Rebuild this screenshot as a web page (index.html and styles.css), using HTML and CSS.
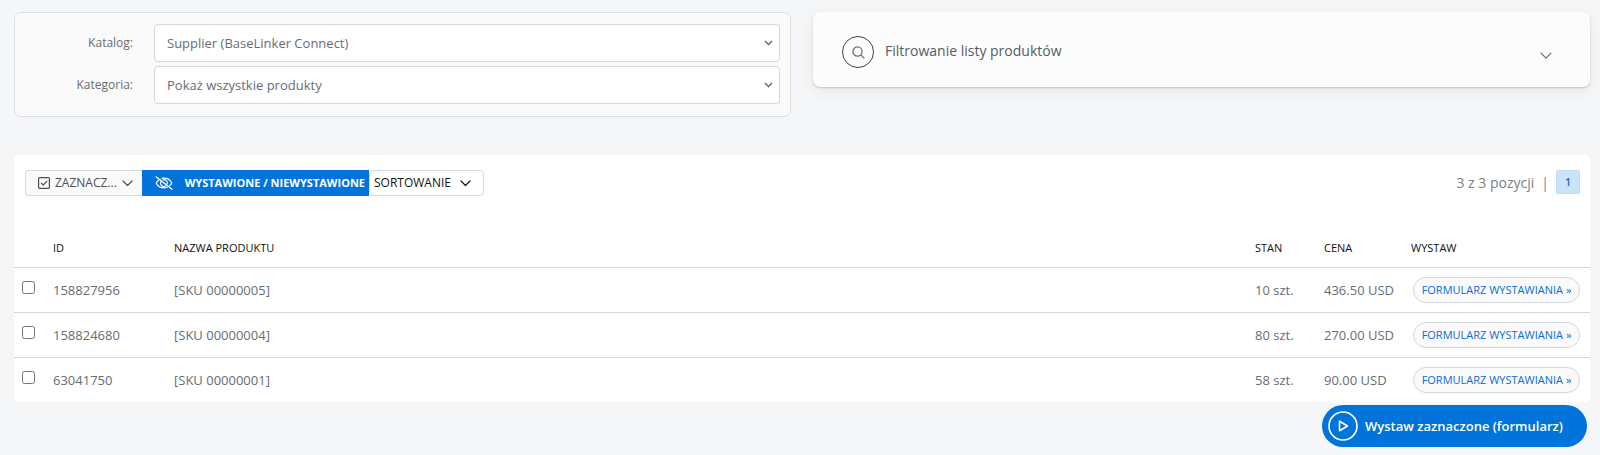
FILE: index.html
```html
<!DOCTYPE html>
<html lang="pl">
<head>
<meta charset="utf-8">
<meta name="viewport" content="width=device-width, initial-scale=1">
<title>Lista produktów</title>
<link rel="stylesheet" href="styles.css">
</head>
<body>
<main class="page">
  <div class="top">
    <form class="catalog">
      <label for="catalog">Katalog:</label>
      <select id="catalog"><option>Supplier (BaseLinker Connect)</option></select>
      <label for="category">Kategoria:</label>
      <select id="category"><option>Pokaż wszystkie produkty</option></select>
    </form>
    <button class="filter" type="button" aria-expanded="false">
      <span class="filter-icon">
        <svg width="14" height="14" viewBox="0 0 14 14"><circle cx="6.500" cy="6.500" r="4.600"/><path d="M9.900 9.900 13 13"/></svg>
      </span>
      <span class="filter-title">Filtrowanie listy produktów</span>
      <svg class="filter-chevron" width="12" height="8" viewBox="0 0 12 8"><path d="M1 1.200 6 6.200 11 1.200"/></svg>
    </button>
  </div>

  <section class="panel">
    <div class="toolbar">
      <div class="group">
        <button class="tool tool-select" type="button">
          <svg width="12" height="12" viewBox="0 0 12 12"><rect x=".6" y=".6" width="10.800" height="10.800" rx="1"/><path d="M3.400 6.200 5.200 8 8.800 4.300"/></svg>
          <span>ZAZNACZ...</span>
          <svg width="11" height="7" viewBox="0 0 11 7"><path d="M1 1 5.500 5.500 10 1"/></svg>
        </button>
        <button class="tool tool-active" type="button">
          <svg width="18" height="14" viewBox="0 0 18 14"><path d="M5 3.200C3.200 4 1.900 5.400 1.200 7c1.400 3 4.300 4.900 7.800 4.900 1.200 0 2.300-.2 3.300-.6M7 2.200C7.600 2.100 8.300 2.100 9 2.100c3.500 0 6.400 1.900 7.800 4.900-.5 1.100-1.300 2.100-2.300 2.900M6 5.500A3.300 3.300 0 0 0 10.500 10M8 3.900A3.300 3.300 0 0 1 12.200 7.800M1 .8 17 13.300"/></svg>
          <span>WYSTAWIONE / NIEWYSTAWIONE</span>
        </button>
        <button class="tool tool-sort" type="button">
          <span>SORTOWANIE</span>
          <svg width="11" height="7" viewBox="0 0 11 7"><path d="M1 1 5.500 5.500 10 1"/></svg>
        </button>
      </div>
      <nav class="pager"><span>3 z 3 pozycji</span><span>|</span><a href="#" aria-current="page">1</a></nav>
    </div>

    <table class="products">
      <colgroup><col class="c-check"><col class="c-id"><col><col class="c-stock"><col class="c-price"><col class="c-action"></colgroup>
      <thead>
        <tr><th></th><th>ID</th><th>NAZWA PRODUKTU</th><th>STAN</th><th>CENA</th><th>WYSTAW</th></tr>
      </thead>
      <tbody>
        <tr><td><input type="checkbox" aria-label="Zaznacz 158827956"></td><td>158827956</td><td>[SKU 00000005]</td><td>10 szt.</td><td>436.50 USD</td><td><button class="pill" type="button">FORMULARZ WYSTAWIANIA »</button></td></tr>
        <tr><td><input type="checkbox" aria-label="Zaznacz 158824680"></td><td>158824680</td><td>[SKU 00000004]</td><td>80 szt.</td><td>270.00 USD</td><td><button class="pill" type="button">FORMULARZ WYSTAWIANIA »</button></td></tr>
        <tr><td><input type="checkbox" aria-label="Zaznacz 63041750"></td><td>63041750</td><td>[SKU 00000001]</td><td>58 szt.</td><td>90.00 USD</td><td><button class="pill" type="button">FORMULARZ WYSTAWIANIA »</button></td></tr>
      </tbody>
    </table>
  </section>

  <div class="footer">
    <button class="submit" type="button">
      <svg width="30" height="30" viewBox="0 0 30 30"><circle cx="15" cy="15" r="14"/><path d="M11.500 10.200v9.600l8-4.800z"/></svg>
      <span>Wystaw zaznaczone (formularz)</span>
    </button>
  </div>
</main>
</body>
</html>
```
FILE: styles.css
```css
* { box-sizing: border-box; }
body {
  margin: 0;
  background: #f4f6f8;
  color: #676d76;
  font: 13px/18px "Open Sans", "Noto Sans", sans-serif;
}
button, select { font: inherit; color: inherit; margin: 0; }
button { cursor: pointer; white-space: nowrap; }
svg { flex: none; fill: none; stroke: currentColor; stroke-width: 1.2; stroke-linecap: round; stroke-linejoin: round; }
.page { padding: 12px 10px 8px 14px; }

.top { display: grid; grid-template-columns: 1fr 1fr; gap: 22px; align-items: start; }
.catalog {
  display: grid;
  grid-template-columns: 118px 1fr;
  gap: 4px 21px;
  align-items: center;
  padding: 11px 10px 12px 0;
  border: 1px solid #dadfe5;
  border-radius: 7px;
  background: #fafafa;
}
.catalog label { text-align: right; font-size: 12px; }
.catalog select {
  appearance: none;
  width: 100%;
  height: 38px;
  padding: 0 32px 0 12px;
  border: 1px solid #d3d7e0;
  border-radius: 4px;
  background: #fff url("data:image/svg+xml,%3Csvg xmlns='http://www.w3.org/2000/svg' width='9' height='6'%3E%3Cpath d='M1 1l3.500 3.500L8 1' fill='none' stroke='%236b7682' stroke-width='1.600'/%3E%3C/svg%3E") no-repeat right 6px center;
}
.filter {
  display: flex;
  align-items: center;
  gap: 11px;
  height: 75px;
  padding: 4px 38px 0 29px;
  border: 0;
  border-radius: 7px;
  background: #fcfcfc;
  box-shadow: 0 1px 2px rgba(0, 0, 0, .18), 0 4px 16px rgba(0, 0, 0, .06);
  text-align: left;
}
.filter-icon {
  display: grid;
  place-items: center;
  width: 32px;
  height: 32px;
  border: 1px solid #3d434c;
  border-radius: 50%;
}
.filter-title { flex: 1; padding-bottom: 2px; font-size: 14px; color: #555c66; }
.filter-chevron { margin-top: 8px; }

.panel { margin-top: 38px; border-radius: 4px; background: #fff; overflow: hidden; }
.toolbar { display: flex; justify-content: space-between; align-items: flex-start; padding: 15px 10px 0 11px; }
.group { display: flex; }
.tool {
  display: flex;
  align-items: center;
  height: 26px;
  border: 1px solid #d6d9e2;
  background: #fff;
  font-size: 12px;
}
.tool-select { width: 117px; padding: 0 11px 0 12px; gap: 5px; border-right: 0; border-radius: 4px 0 0 4px; background: #fafafa; color: #4a4f57; }
.tool-select svg:last-child { margin-left: auto; }
.tool-active { width: 227px; padding: 0 3px 0 12px; justify-content: space-between; border-color: #0074db; background: #0074db; color: #fff; font-size: 11px; font-weight: 700; }
.tool-sort { width: 115px; padding: 0 12px 0 4px; justify-content: space-between; border-radius: 4px; color: #111; }
.pager { display: flex; gap: 7px; font-size: 14px; line-height: 26px; color: #7b8087; }
.pager a {
  width: 24px;
  height: 24px;
  border: 1px solid #bcdcf5;
  border-radius: 2px;
  background: #c8e3fa;
  color: #1d5fb4;
  font-size: 10px;
  font-weight: 600;
  line-height: 22px;
  text-align: center;
  text-decoration: none;
}

.products { width: 100%; margin-top: 32px; border-collapse: collapse; table-layout: fixed; }
.products th { height: 39px; padding: 1px 0 0; color: #111; font-size: 11px; font-weight: 400; text-align: left; }
.products td { height: 45px; padding: 0; border-top: 1px solid #d3d6de; }
.products input { display: block; width: 13px; height: 13px; margin: 0 0 4px 8px; }
.c-check { width: 39px; }
.c-id { width: 121px; }
.c-stock { width: 69px; }
.c-price { width: 87px; }
.c-action { width: 179px; }
.pill {
  display: block;
  width: 167px;
  height: 26px;
  margin-left: 2px;
  padding: 0;
  border: 1px solid #d3d6de;
  border-radius: 13px;
  background: #fafafa;
  color: #0a6cd6;
  font-size: 11px;
  text-align: center;
}

.footer { display: flex; justify-content: flex-end; padding: 3px 3px 0; }
.submit {
  display: flex;
  align-items: center;
  gap: 7px;
  width: 265px;
  height: 42px;
  padding: 0 6px;
  border: 0;
  border-radius: 21px;
  background: #0074db;
  color: #fff;
  font-size: 13px;
  font-weight: 600;
}
.submit svg { stroke-width: 1.6; }
```
